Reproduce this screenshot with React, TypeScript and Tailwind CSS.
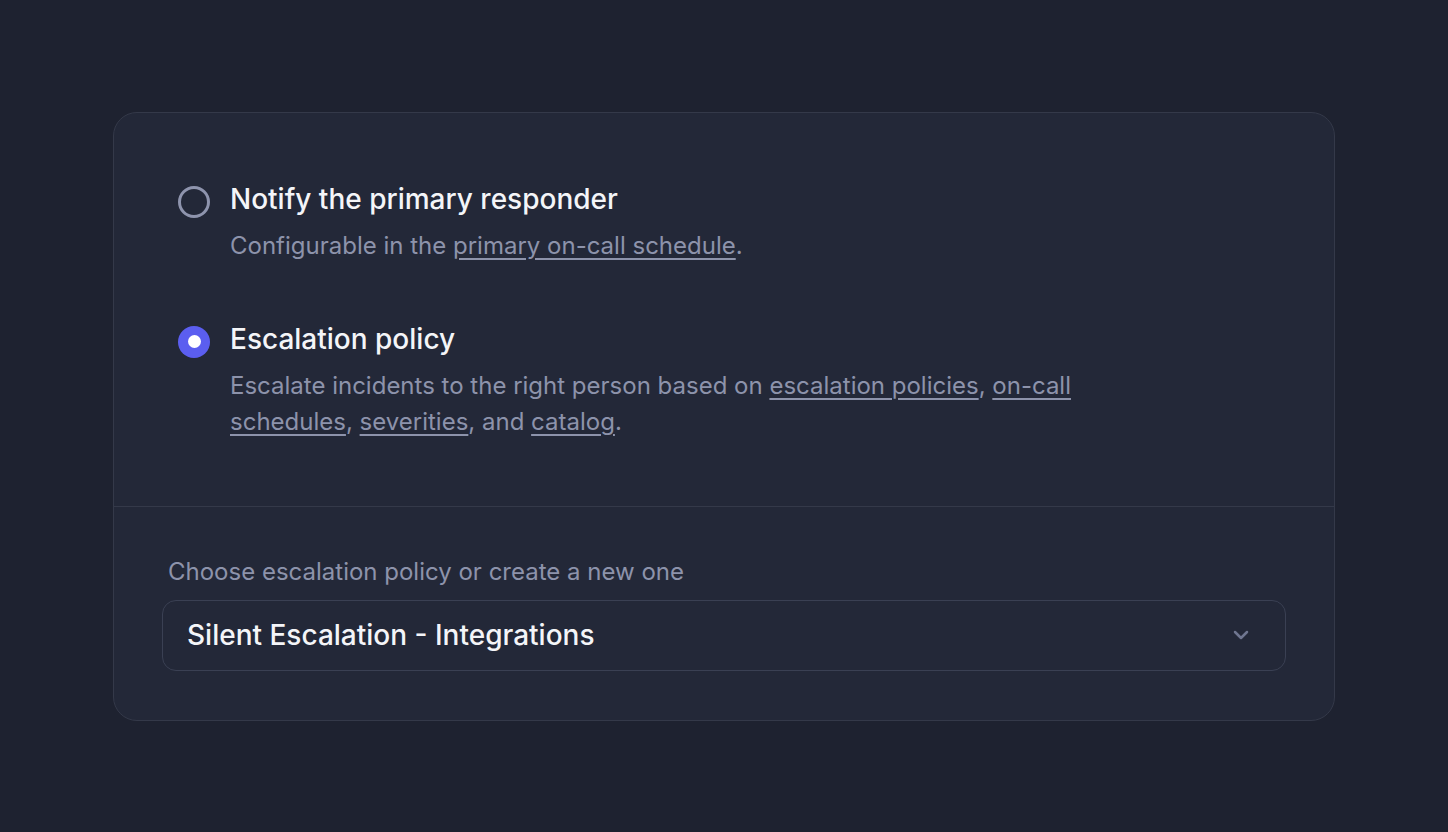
import { useState } from "react";

type Choice = "primary" | "escalation";

function Radio({ checked }: { checked: boolean }) {
  return checked ? (
    <span className="mt-[3px] flex h-8 w-8 shrink-0 items-center justify-center rounded-full bg-[#5b5ef0]">
      <span className="h-[13px] w-[13px] rounded-full bg-white" />
    </span>
  ) : (
    <span className="mt-[3px] h-8 w-8 shrink-0 rounded-full border-[3px] border-[#8e94ad]" />
  );
}

function Link({ children }: { children: React.ReactNode }) {
  return (
    <a href="#" className="underline decoration-[1.5px] underline-offset-[4px]">
      {children}
    </a>
  );
}

export default function App() {
  const [choice, setChoice] = useState<Choice>("escalation");

  return (
    <div
      className="flex min-h-screen items-center justify-center bg-[#1e2230]"
      style={{ fontFamily: "Inter, 'Noto Sans', sans-serif" }}
    >
      <div className="w-[1222px] rounded-[24px] border border-[#343949] bg-[#232838]">
        <div className="flex flex-col gap-[59px] px-16 pb-[66px] pt-[70px]">
          <label className="flex cursor-pointer items-start gap-5" onClick={() => setChoice("primary")}>
            <Radio checked={choice === "primary"} />
            <div>
              <div className="text-[28px] font-medium leading-8 text-[#f4f5f8]">Notify the primary responder</div>
              <p className="mt-[13px] text-[24px] leading-9 text-[#8d93ab]">
                Configurable in the <Link>primary on-call schedule</Link>.
              </p>
            </div>
          </label>
          <label className="flex cursor-pointer items-start gap-5" onClick={() => setChoice("escalation")}>
            <Radio checked={choice === "escalation"} />
            <div>
              <div className="text-[28px] font-medium leading-8 text-[#f4f5f8]">Escalation policy</div>
              <p className="mt-[13px] max-w-[880px] text-[24px] leading-9 text-[#8d93ab]">
                Escalate incidents to the right person based on <Link>escalation policies</Link>,{" "}
                <Link>on-call schedules</Link>, <Link>severities</Link>, and <Link>catalog</Link>.
              </p>
            </div>
          </label>
        </div>
        <div className="border-t border-[#343949] px-12 pb-[49px] pt-[50px]">
          <div className="ml-1.5 text-[24px] leading-[30px] text-[#8d93ab]">
            Choose escalation policy or create a new one
          </div>
          <button className="mt-[13px] flex h-[71px] w-full items-center justify-between rounded-[14px] border-[1.5px] border-[#3a4053] pl-6 pr-9 text-left">
            <span className="text-[28px] font-medium text-[#f4f5f8]">Silent Escalation - Integrations</span>
            <svg width="16" height="10" viewBox="0 0 16 10" fill="none">
              <path d="M2 2l6 6 6-6" stroke="#6f7690" strokeWidth="2.5" strokeLinecap="round" strokeLinejoin="round" />
            </svg>
          </button>
        </div>
      </div>
    </div>
  );
}
